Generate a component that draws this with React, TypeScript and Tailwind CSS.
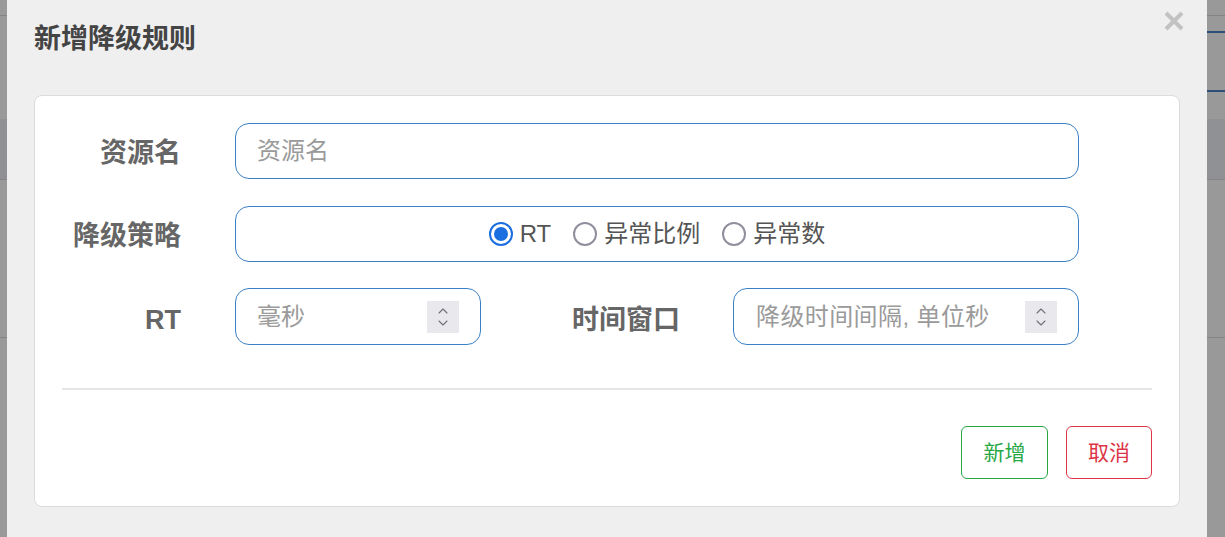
import { ChevronUp, ChevronDown } from "lucide-react";

const font = "font-['Liberation_Sans','Noto_Sans_CJK_SC',sans-serif]";

function Spinner() {
  return (
    <div className="flex h-[32px] w-[32px] flex-col items-center justify-center bg-[#e9e9ed] text-[#6f6f78]">
      <ChevronUp className="-mb-[2px] h-[16px] w-[16px]" strokeWidth={1.6} />
      <ChevronDown className="-mt-[2px] h-[16px] w-[16px]" strokeWidth={1.6} />
    </div>
  );
}

function Radio({ checked, label }: { checked?: boolean; label: string }) {
  return (
    <label className="flex items-center gap-[7px]">
      {checked ? (
        <span className="flex h-[24px] w-[24px] items-center justify-center rounded-full border-[2px] border-[#1a6ee0] bg-white">
          <span className="h-[14px] w-[14px] rounded-full bg-[#1a6ee0]" />
        </span>
      ) : (
        <span className="h-[24px] w-[24px] rounded-full border-[2px] border-[#8f8f9d] bg-white" />
      )}
      <span className="text-[24px] leading-none text-[#555]">{label}</span>
    </label>
  );
}

function SideStrip({ blue }: { blue?: boolean }) {
  return (
    <div className="flex h-full flex-col bg-[#999999]">
      <div className="h-[15px] shrink-0" />
      <div className="h-px shrink-0 bg-[#848484]" />
      {blue ? (
        <>
          <div className="h-[15px] shrink-0" />
          <div className="h-[2px] shrink-0 bg-[#2c4f78]" />
          <div className="h-[57px] shrink-0" />
          <div className="h-[2px] shrink-0 bg-[#2c4f78]" />
          <div className="h-[27px] shrink-0" />
        </>
      ) : (
        <div className="h-[103px] shrink-0" />
      )}
      <div className="h-[60px] shrink-0 bg-[#909194]" />
      <div className="h-px shrink-0 bg-[#848484]" />
      <div className="h-[157px] shrink-0" />
      <div className="h-px shrink-0 bg-[#848484]" />
      <div className="flex-1" />
    </div>
  );
}

export default function App() {
  return (
    <div className={`flex h-[537px] w-[1225px] overflow-hidden ${font}`}>
      <div className="w-[7px] shrink-0">
        <SideStrip />
      </div>

      <div className="relative w-[1200px] shrink-0 bg-[#efefef]">
        {/* Header */}
        <div className="h-[95px] pl-[27px] pt-[24px]">
          <h2 className="text-[27px] font-bold leading-[31px] text-[#444]">新增降级规则</h2>
        </div>
        <button className="absolute right-[22px] top-[10px] text-[#c2c2c2]" title="Close">
          <svg width="22" height="22" viewBox="0 0 22 22">
            <path d="M3 3 L19 19 M19 3 L3 19" stroke="currentColor" strokeWidth="4" />
          </svg>
        </button>

        {/* Body card */}
        <div className="mx-[27px] h-[412px] rounded-lg border border-[#dcdcdc] bg-white px-[27px] pt-[27px]">
          <div className="flex flex-col gap-[27px]">
            <div className="flex items-center">
              <div className="w-[119px] pt-[5px] text-right text-[27px] font-bold text-[#666]">资源名</div>
              <div className="ml-[54px] flex h-[56px] flex-1 items-center rounded-[14px] border border-[#3b7fc4] px-[21px] text-[24px] text-[#9a9a9a]">
                资源名
              </div>
              <div className="w-[73px]" />
            </div>

            <div className="flex items-center">
              <div className="w-[119px] pt-[5px] text-right text-[27px] font-bold text-[#666]">降级策略</div>
              <div className="ml-[54px] flex h-[56px] flex-1 items-center justify-center gap-[22px] rounded-[14px] border border-[#3b7fc4]">
                <Radio checked label="RT" />
                <Radio label="异常比例" />
                <Radio label="异常数" />
              </div>
              <div className="w-[73px]" />
            </div>

            <div className="-mt-px flex items-center">
              <div className="w-[119px] pt-[7px] text-right text-[27px] font-bold text-[#666]">RT</div>
              <div className="ml-[54px] flex h-[57px] w-[246px] items-center justify-between rounded-[14px] border border-[#3b7fc4] pl-[21px] pr-[21px] text-[24px] text-[#9a9a9a]">
                <span>毫秒</span>
                <Spinner />
              </div>
              <div className="w-[199px] pt-[7px] text-right text-[27px] font-bold text-[#666]">时间窗口</div>
              <div className="ml-[53px] flex h-[57px] flex-1 items-center justify-between rounded-[14px] border border-[#3b7fc4] pl-[22px] pr-[21px] text-[24px] text-[#9a9a9a]">
                <span className="tracking-[0.4px]">降级时间间隔, 单位秒</span>
                <Spinner />
              </div>
              <div className="w-[73px]" />
            </div>
          </div>

          <div className="mt-[43px] h-[2px] bg-[#e5e5e5]" />

          <div className="mt-[36px] flex justify-end gap-[18px]">
            <button className="h-[53px] w-[87px] rounded-[6px] border border-[#28a745] text-[21px] text-[#28a745]">新增</button>
            <button className="h-[53px] w-[86px] rounded-[6px] border border-[#dc3545] text-[21px] text-[#dc3545]">取消</button>
          </div>
        </div>
      </div>

      <div className="flex-1">
        <SideStrip blue />
      </div>
    </div>
  );
}
